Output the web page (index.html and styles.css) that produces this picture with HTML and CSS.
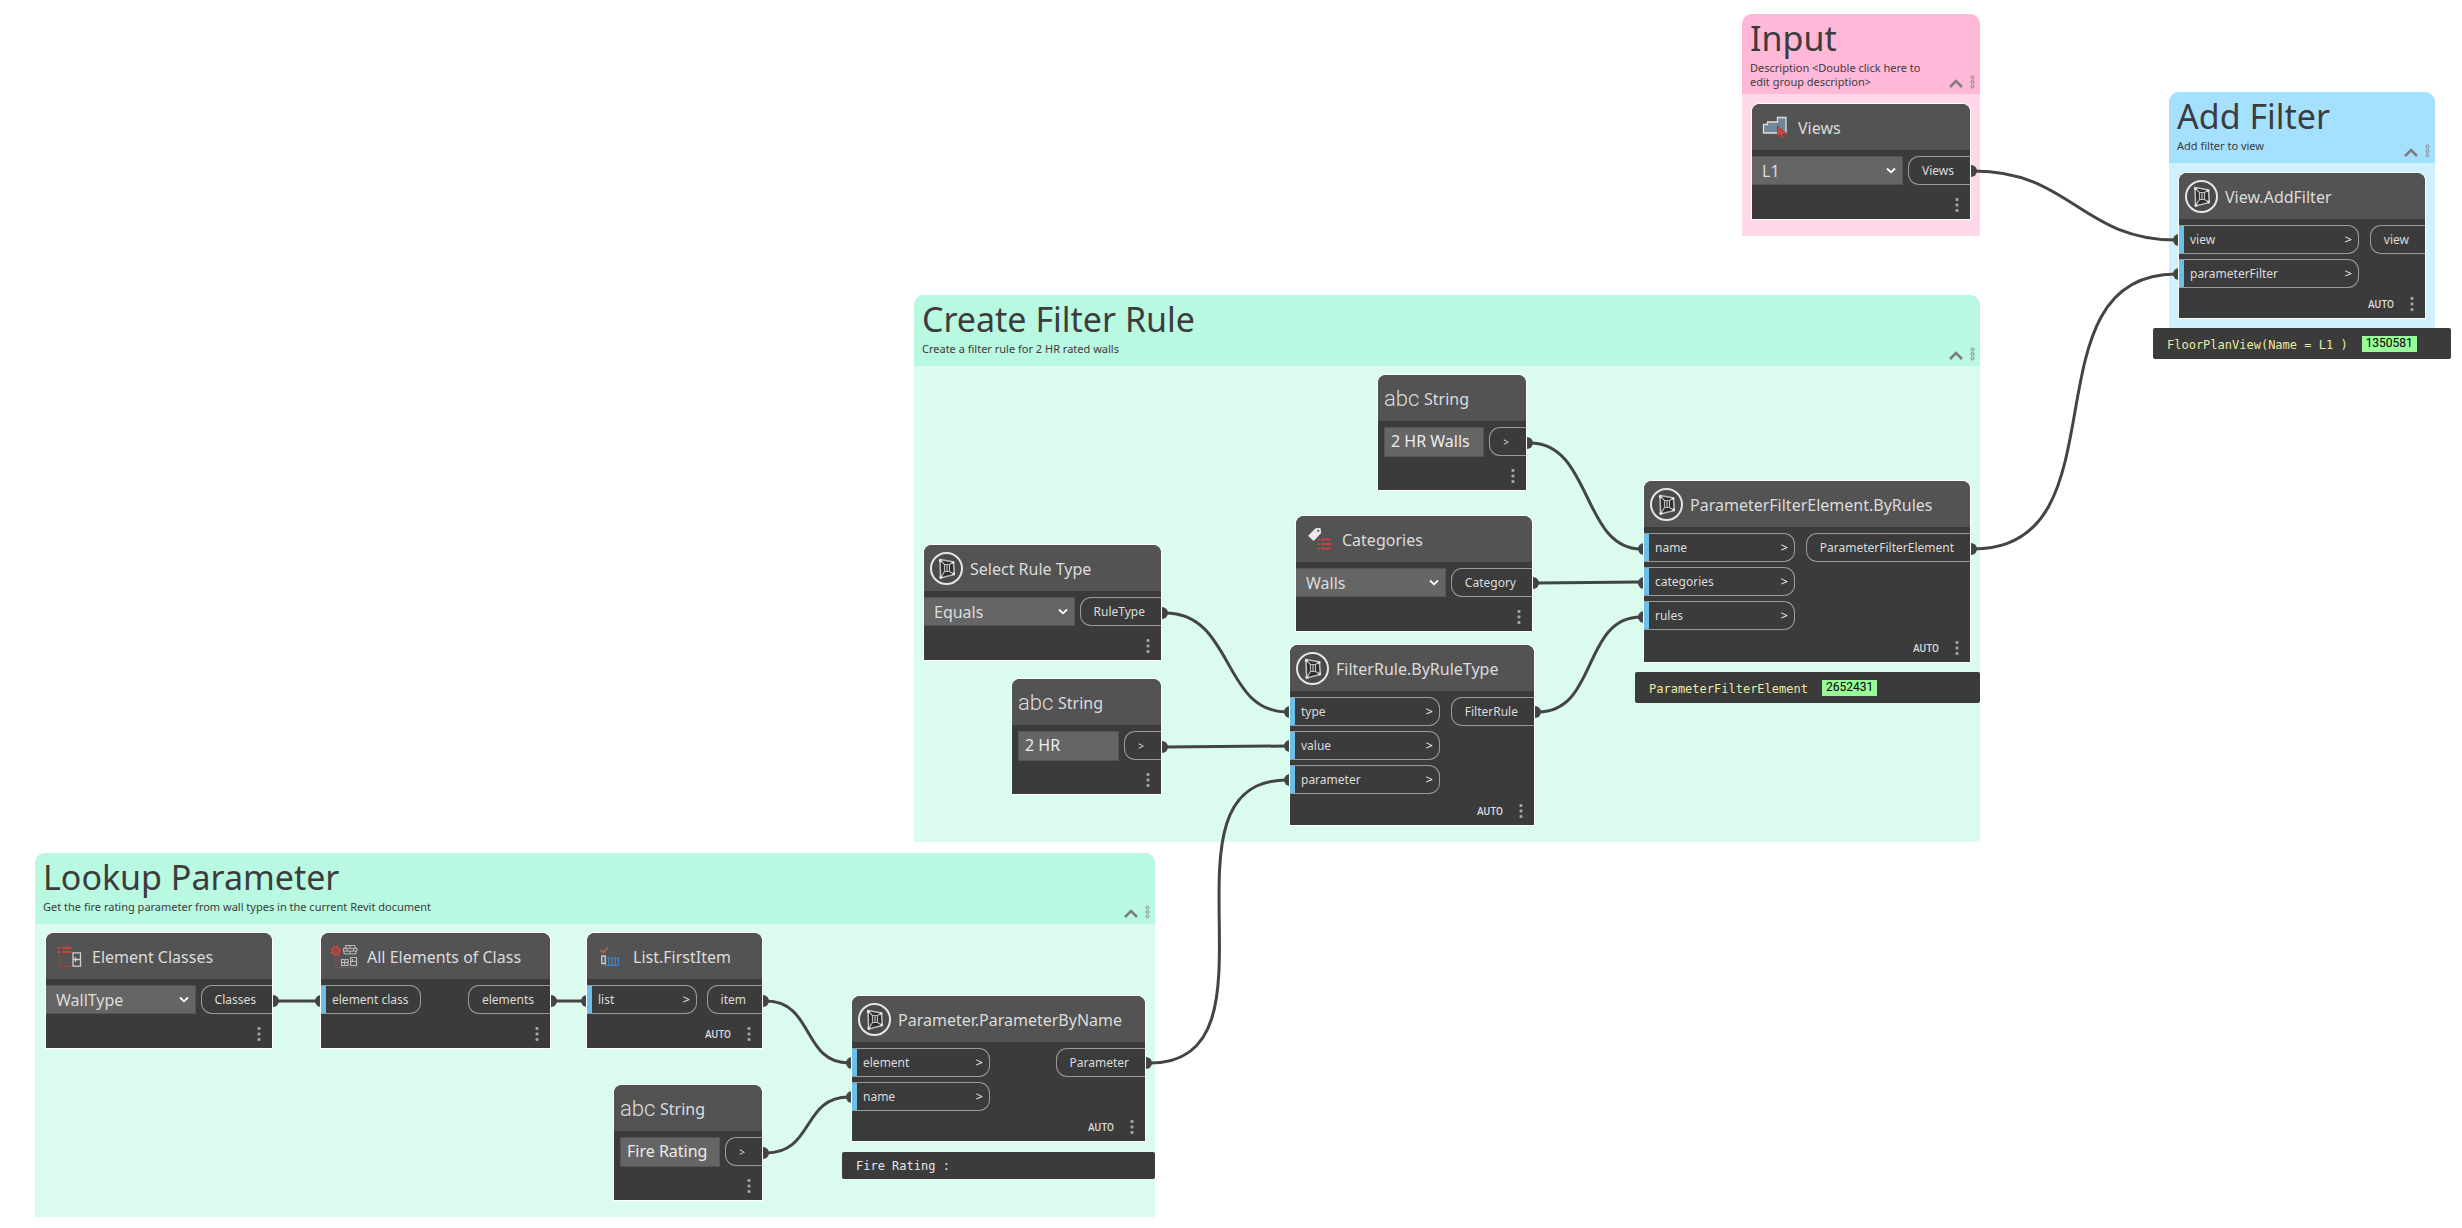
FILE: index.html
```html
<!DOCTYPE html>
<html lang="en">
<head>
<meta charset="utf-8">
<title>Graph workspace</title>
<link rel="stylesheet" href="styles.css">
</head>
<body>
<svg class="defs" aria-hidden="true">
  <symbol id="chevron-down" viewBox="0 0 10 7"><path d="M1 1.5l4 3.8 4-3.8" fill="none" stroke="#fff" stroke-width="1.8"/></symbol>
  <symbol id="chevron-up" viewBox="0 0 14 9"><path d="M1 8l6-6 6 6" fill="none" stroke="#7d7d7d" stroke-width="2.6"/></symbol>
  <symbol id="rings" viewBox="0 0 5 14"><g fill="none" stroke="#858585"><circle cx="2.5" cy="2.5" r="1.5"/><circle cx="2.5" cy="7" r="1.5"/><circle cx="2.5" cy="11.5" r="1.5"/></g></symbol>
  <symbol id="dots" viewBox="0 0 4 16"><g fill="#a3a3a3"><rect x=".5" y="1" width="3" height="3" rx="1"/><rect x=".5" y="6.5" width="3" height="3" rx="1"/><rect x=".5" y="12" width="3" height="3" rx="1"/></g></symbol>
  <symbol id="package" viewBox="0 0 33 33">
    <circle cx="16.5" cy="16.5" r="15.5" fill="#4a4a4a" stroke="#e6e6e6" stroke-width="2"/>
    <path d="M10 7.500l13.500 2.400.8 12.600L10.600 26z" fill="#2c2c2c" stroke="#bdbdbd" stroke-width="1.600"/>
    <path d="M14.500 12.500h5v7h-5zM10 8l4.500 4.500M23 10.400l-3.500 2.100M23.800 22l-4.300-2.500M10.600 25.400l3.900-5.900M17 12.500v7" fill="none" stroke="#bdbdbd" stroke-width="1.200"/>
    <g fill="#e6e6e6"><circle cx="10.400" cy="8.400" r="1.500"/><circle cx="23" cy="10.600" r="1.400"/><circle cx="23.700" cy="22" r="1.400"/><circle cx="11" cy="25.300" r="1.500"/></g>
  </symbol>
  <symbol id="views" viewBox="0 0 33 33">
    <path d="M5.500 13.500h4v-2.500h10v-4.500h8.500v15.500H5.500z" fill="#6f879b" stroke="#dedede" stroke-width="1.300"/>
    <path d="M19.500 15v11l2.800-2.200 1.700 4 2.200-1-1.700-3.800 4.200-.4z" fill="#d0453e" stroke="#6b3a38" stroke-width=".6"/>
  </symbol>
  <symbol id="categories" viewBox="0 0 33 33">
    <path d="M6 12.700l7.700-7.400 4.800-.3.700 5L11.700 18z" fill="#ececec"/><circle cx="16.200" cy="7.800" r="1.100" fill="#535353"/>
    <path d="M15.500 16.500h2.200m1.600 0h9.700M15.500 21h2.200m1.600 0h9.700M15.500 25.500h2.200m1.600 0h9.700" stroke="#c9423f" stroke-width="1.900"/>
  </symbol>
  <symbol id="classes" viewBox="0 0 33 33">
    <path d="M5.500 8H8m2 0h9.500M5.500 12H8m2 0h9.500" stroke="#c9423f" stroke-width="2"/>
    <path d="M8 14.500V26.500H20" fill="none" stroke="#c9423f" stroke-width="1.200" stroke-dasharray="1 1"/>
    <path d="M21 12.800h7.500v13.400H21zM21 19.500h7.500M23.500 17v2M23.500 20v2" fill="none" stroke="#cfcfcf" stroke-width="1.300"/>
  </symbol>
  <symbol id="elements" viewBox="0 0 33 33">
    <circle cx="8.700" cy="10.700" r="3.200" fill="none" stroke="#c9423f" stroke-width="2"/><circle cx="8.700" cy="10.700" r="4.700" fill="none" stroke="#c9423f" stroke-width="1.600" stroke-dasharray="1.850 1.840"/><circle cx="8.700" cy="10.700" r="1" fill="#c9423f"/>
    <path d="M9 16.500V27.500H31" fill="none" stroke="#c9423f" stroke-width="1.200" stroke-dasharray="1 1"/>
    <path d="M18.500 5.500h9.500v2.800h2v2.800h-1v2.800H17v-2.800h-.5V8.300h2zM16.500 8.300h13.500M16.500 11.100h13.500M23 5.500v2.800M20 8.300v2.800M26.500 8.300v2.800M23 11.100v2.800" fill="none" stroke="#b9b9b9"/>
    <path d="M14.500 19.500h6.500v6h-6.500zM17.700 19.500v6M14.500 22.500H21M23.700 17.500h5.800v8h-5.800zM23.700 21.500h5.800M25.500 19v2" fill="none" stroke="#b9b9b9" stroke-width="1.200"/>
  </symbol>
  <symbol id="first" viewBox="0 0 33 33">
    <path d="M7.500 10l2.800 2.600 4.600-4.800" fill="none" stroke="#bb5a58" stroke-width="1.800"/>
    <path d="M12.500 18h12.800v7.500H12.500zM15.700 18v7.500M19 18v7.500M22.200 18v7.500" fill="none" stroke="#4288c4" stroke-width="1.200"/>
    <path d="M8.800 16h3.400v7.500H8.800z" fill="#535353" stroke="#cfcfcf" stroke-width="1.300"/>
  </symbol>
</svg>

<main class="workspace">
  <section class="group pink g-input">
    <header class="group-head">
      <div class="group-text"><h2>Input</h2><p>Description &lt;Double click here to edit group description&gt;</p></div>
      <button class="icon-btn" aria-label="Collapse group"><svg class="i-up"><use href="#chevron-up"/></svg></button>
      <button class="icon-btn" aria-label="Group menu"><svg class="i-rings"><use href="#rings"/></svg></button>
    </header>
  </section>
  <section class="group blue g-add">
    <header class="group-head">
      <div class="group-text"><h2>Add Filter</h2><p>Add filter to view</p></div>
      <button class="icon-btn" aria-label="Collapse group"><svg class="i-up"><use href="#chevron-up"/></svg></button>
      <button class="icon-btn" aria-label="Group menu"><svg class="i-rings"><use href="#rings"/></svg></button>
    </header>
  </section>
  <section class="group green g-create">
    <header class="group-head">
      <div class="group-text"><h2>Create Filter Rule</h2><p>Create a filter rule for 2 HR rated walls</p></div>
      <button class="icon-btn" aria-label="Collapse group"><svg class="i-up"><use href="#chevron-up"/></svg></button>
      <button class="icon-btn" aria-label="Group menu"><svg class="i-rings"><use href="#rings"/></svg></button>
    </header>
  </section>
  <section class="group green g-lookup">
    <header class="group-head">
      <div class="group-text"><h2>Lookup Parameter</h2><p>Get the fire rating parameter from wall types in the current Revit document</p></div>
      <button class="icon-btn" aria-label="Collapse group"><svg class="i-up"><use href="#chevron-up"/></svg></button>
      <button class="icon-btn" aria-label="Group menu"><svg class="i-rings"><use href="#rings"/></svg></button>
    </header>
  </section>

  <svg class="wires" aria-hidden="true">
    <g fill="none" stroke="#444" stroke-width="3">
      <path d="M1974 171C2070 171 2082 240 2176 240"/>
      <path d="M1974 549C2128 549 2022 274 2176 274"/>
      <path d="M1530 443C1592 443 1582 549 1641 549"/>
      <path d="M1536 583L1641 582"/>
      <path d="M1538 712C1598 712 1582 617 1641 617"/>
      <path d="M1165 613C1234 613 1222 712 1287 712"/>
      <path d="M1165 747L1287 746"/>
      <path d="M1150 1063C1292 1063 1147 780 1287 780"/>
      <path d="M276 1001H318M554 1001H584"/>
      <path d="M766 1001C814 1001 802 1063 849 1063"/>
      <path d="M766 1153C814 1153 802 1097 849 1097"/>
    </g>
    <g fill="#444">
      <circle cx="1971" cy="171" r="6"/><circle cx="1971" cy="549" r="6"/><circle cx="1527" cy="443" r="6"/><circle cx="1533" cy="583" r="6"/><circle cx="1535" cy="712" r="6"/><circle cx="1162" cy="613" r="6"/><circle cx="1162" cy="747" r="6"/><circle cx="1146" cy="1063" r="6"/><circle cx="273" cy="1001" r="6"/><circle cx="551" cy="1001" r="6"/><circle cx="763" cy="1001" r="6"/><circle cx="763" cy="1153" r="6"/>
      <circle cx="2179" cy="240" r="6"/><circle cx="2179" cy="274" r="6"/><circle cx="1644" cy="549" r="6"/><circle cx="1644" cy="583" r="6"/><circle cx="1644" cy="617" r="6"/><circle cx="1290" cy="712" r="6"/><circle cx="1290" cy="746" r="6"/><circle cx="1290" cy="780" r="6"/><circle cx="321" cy="1001" r="6"/><circle cx="587" cy="1001" r="6"/><circle cx="852" cy="1063" r="6"/><circle cx="852" cy="1097" r="6"/>
    </g>
  </svg>

  <article class="node n-views">
    <header class="node-head"><svg class="icon"><use href="#views"/></svg><h3>Views</h3></header>
    <div class="node-body"><div class="pick"><select aria-label="Views"><option>L1</option></select><svg class="i-down"><use href="#chevron-down"/></svg></div><div class="out">Views</div></div>
    <footer class="node-foot"><button class="icon-btn" aria-label="Node menu"><svg class="i-dots"><use href="#dots"/></svg></button></footer>
  </article>

  <article class="node n-addfilter">
    <header class="node-head"><svg class="icon"><use href="#package"/></svg><h3>View.AddFilter</h3></header>
    <div class="node-body"><div class="ins"><div class="in">view<b>&gt;</b></div><div class="in">parameterFilter<b>&gt;</b></div></div><div class="out">view</div></div>
    <footer class="node-foot"><span>AUTO</span><button class="icon-btn" aria-label="Node menu"><svg class="i-dots"><use href="#dots"/></svg></button></footer>
  </article>
  <output class="result r-add"><code>FloorPlanView(Name = L1 )</code><mark>1350581</mark></output>

  <article class="node n-string-walls">
    <header class="node-head"><span class="icon abc">abc</span><h3>String</h3></header>
    <div class="node-body"><input class="text" type="text" aria-label="String" value="2 HR Walls"><div class="out mini">&gt;</div></div>
    <footer class="node-foot"><button class="icon-btn" aria-label="Node menu"><svg class="i-dots"><use href="#dots"/></svg></button></footer>
  </article>

  <article class="node n-categories">
    <header class="node-head"><svg class="icon"><use href="#categories"/></svg><h3>Categories</h3></header>
    <div class="node-body"><div class="pick"><select aria-label="Categories"><option>Walls</option></select><svg class="i-down"><use href="#chevron-down"/></svg></div><div class="out">Category</div></div>
    <footer class="node-foot"><button class="icon-btn" aria-label="Node menu"><svg class="i-dots"><use href="#dots"/></svg></button></footer>
  </article>

  <article class="node n-byrules">
    <header class="node-head"><svg class="icon"><use href="#package"/></svg><h3>ParameterFilterElement.ByRules</h3></header>
    <div class="node-body"><div class="ins"><div class="in">name<b>&gt;</b></div><div class="in">categories<b>&gt;</b></div><div class="in">rules<b>&gt;</b></div></div><div class="out">ParameterFilterElement</div></div>
    <footer class="node-foot"><span>AUTO</span><button class="icon-btn" aria-label="Node menu"><svg class="i-dots"><use href="#dots"/></svg></button></footer>
  </article>
  <output class="result r-rules"><code>ParameterFilterElement</code><mark>2652431</mark></output>

  <article class="node n-ruletype">
    <header class="node-head"><svg class="icon"><use href="#package"/></svg><h3>Select Rule Type</h3></header>
    <div class="node-body"><div class="pick"><select aria-label="Rule type"><option>Equals</option></select><svg class="i-down"><use href="#chevron-down"/></svg></div><div class="out">RuleType</div></div>
    <footer class="node-foot"><button class="icon-btn" aria-label="Node menu"><svg class="i-dots"><use href="#dots"/></svg></button></footer>
  </article>

  <article class="node n-string-hr">
    <header class="node-head"><span class="icon abc">abc</span><h3>String</h3></header>
    <div class="node-body"><input class="text" type="text" aria-label="String" value="2 HR"><div class="out mini">&gt;</div></div>
    <footer class="node-foot"><button class="icon-btn" aria-label="Node menu"><svg class="i-dots"><use href="#dots"/></svg></button></footer>
  </article>

  <article class="node n-filterrule">
    <header class="node-head"><svg class="icon"><use href="#package"/></svg><h3>FilterRule.ByRuleType</h3></header>
    <div class="node-body"><div class="ins"><div class="in">type<b>&gt;</b></div><div class="in">value<b>&gt;</b></div><div class="in">parameter<b>&gt;</b></div></div><div class="out">FilterRule</div></div>
    <footer class="node-foot"><span>AUTO</span><button class="icon-btn" aria-label="Node menu"><svg class="i-dots"><use href="#dots"/></svg></button></footer>
  </article>

  <article class="node n-classes">
    <header class="node-head"><svg class="icon"><use href="#classes"/></svg><h3>Element Classes</h3></header>
    <div class="node-body"><div class="pick"><select aria-label="Element class"><option>WallType</option></select><svg class="i-down"><use href="#chevron-down"/></svg></div><div class="out">Classes</div></div>
    <footer class="node-foot"><button class="icon-btn" aria-label="Node menu"><svg class="i-dots"><use href="#dots"/></svg></button></footer>
  </article>

  <article class="node n-elements">
    <header class="node-head"><svg class="icon"><use href="#elements"/></svg><h3>All Elements of Class</h3></header>
    <div class="node-body"><div class="ins"><div class="in">element class</div></div><div class="out">elements</div></div>
    <footer class="node-foot"><button class="icon-btn" aria-label="Node menu"><svg class="i-dots"><use href="#dots"/></svg></button></footer>
  </article>

  <article class="node n-first">
    <header class="node-head"><svg class="icon"><use href="#first"/></svg><h3>List.FirstItem</h3></header>
    <div class="node-body"><div class="ins"><div class="in">list<b>&gt;</b></div></div><div class="out">item</div></div>
    <footer class="node-foot"><span>AUTO</span><button class="icon-btn" aria-label="Node menu"><svg class="i-dots"><use href="#dots"/></svg></button></footer>
  </article>

  <article class="node n-string-fire">
    <header class="node-head"><span class="icon abc">abc</span><h3>String</h3></header>
    <div class="node-body"><input class="text" type="text" aria-label="String" value="Fire Rating"><div class="out mini">&gt;</div></div>
    <footer class="node-foot"><button class="icon-btn" aria-label="Node menu"><svg class="i-dots"><use href="#dots"/></svg></button></footer>
  </article>

  <article class="node n-byname">
    <header class="node-head"><svg class="icon"><use href="#package"/></svg><h3>Parameter.ParameterByName</h3></header>
    <div class="node-body"><div class="ins"><div class="in">element<b>&gt;</b></div><div class="in">name<b>&gt;</b></div></div><div class="out">Parameter</div></div>
    <footer class="node-foot"><span>AUTO</span><button class="icon-btn" aria-label="Node menu"><svg class="i-dots"><use href="#dots"/></svg></button></footer>
  </article>
  <output class="result plain r-name"><code>Fire Rating :</code></output>
</main>
</body>
</html>
```
FILE: styles.css
```css
* { box-sizing: border-box; }
body { margin: 0; background: #fff; font-family: "Noto Sans", sans-serif; }
h2, h3, p { margin: 0; font-weight: 400; }
svg { display: block; }
.defs { display: none; }
.workspace { position: relative; min-height: 100vh; overflow: hidden; }

/* Groups */
.group { position: absolute; border-radius: 10px 10px 0 0; overflow: hidden; }
.group-head { display: flex; align-items: flex-end; min-height: 71px; padding: 1px 5px 5px 8px; color: #3c3c3c; }
.group-text { flex: 1; align-self: flex-start; }
.group-text h2 { font-size: 34px; line-height: 46px; white-space: nowrap; }
.group-text p { font-size: 11px; line-height: 14px; }
.pink { background: #ffd9ea; }
.pink .group-head { background: #ffb8d8; }
.blue { background: #d0efff; }
.blue .group-head { background: #a5e1ff; }
.green { background: #dcfbef; }
.green .group-head { background: #b9f8e1; }
.g-input { left: 1742px; top: 14px; width: 238px; height: 222px; }
.g-add { left: 2169px; top: 92px; width: 266px; height: 240px; }
.g-create { left: 914px; top: 295px; width: 1066px; height: 547px; }
.g-lookup { left: 35px; top: 853px; width: 1120px; height: 364px; }

.icon-btn { padding: 0; border: 0; background: none; }
.i-up { width: 14px; height: 9px; margin: 0 7px 1px; }
.i-rings { width: 5px; height: 14px; }
.i-dots { width: 4px; height: 16px; }

.wires { position: absolute; left: 0; top: 0; width: 100%; height: 100%; }

/* Nodes */
.node { position: absolute; display: flex; flex-direction: column; min-height: 115px; background: #3b3b3b; border-radius: 8px 8px 0 0; box-shadow: 0 0 0 1px #fff; color: #dcdcdc; }
.node-head { display: flex; align-items: center; gap: 7px; height: 46px; padding: 1px 0 0 6px; background: #535353; border-radius: 8px 8px 0 0; }
.node-head h3 { font-size: 16px; line-height: 24px; white-space: nowrap; }
.icon { flex: none; width: 33px; height: 33px; }
.abc { font: 300 22px/33px Roboto, sans-serif; }
.node-body { display: flex; justify-content: space-between; align-items: flex-start; gap: 5px; padding-top: 6px; }
.ins { display: grid; gap: 5px; width: var(--in); }
.in, .out { display: flex; align-items: center; height: 29px; border: 1px solid #999; font-size: 12px; white-space: nowrap; }
.in { justify-content: space-between; padding: 0 6px 1px 11px; border-left: 0; border-radius: 0 11px 11px 0; background: linear-gradient(#6ac0e8, #6ac0e8) left / 5px 100% no-repeat; }
.in b { font-size: 13px; font-weight: 500; }
.out { padding: 0 16px 0 13px; border-right: 0; border-radius: 11px 0 0 11px; }
.mini { padding-right: 17px; font-size: 10px; }
.pick { display: grid; flex: 1; align-items: center; }
.pick > * { grid-area: 1 / 1; }
.pick select { width: 100%; height: 29px; padding: 1px 24px 0 10px; border: 1px solid #555; border-left: 0; border-radius: 0; background: #656565; color: #dcdcdc; font: 16px "Noto Sans", sans-serif; appearance: none; }
.i-down { justify-self: end; width: 10px; height: 7px; margin-right: 7px; pointer-events: none; }
.text { flex: 1; min-width: 0; height: 30px; margin-left: 6px; padding: 0 6px 3px; border: 1px solid #555; background: #656565; color: #ececec; font: 16px "Noto Sans", sans-serif; }
.node-foot { display: flex; justify-content: flex-end; align-items: center; gap: 16px; height: 28px; margin-top: auto; padding-right: 11px; font: 500 10px Roboto, sans-serif; }

.n-views { left: 1752px; top: 104px; width: 218px; }
.n-addfilter { left: 2179px; top: 173px; width: 246px; height: 145px; --in: 180px; }
.n-string-walls { left: 1378px; top: 375px; width: 148px; }
.n-categories { left: 1296px; top: 516px; width: 236px; }
.n-byrules { left: 1644px; top: 481px; width: 326px; height: 181px; --in: 151px; }
.n-ruletype { left: 924px; top: 545px; width: 237px; }
.n-string-hr { left: 1012px; top: 679px; width: 149px; }
.n-filterrule { left: 1290px; top: 645px; width: 244px; height: 180px; --in: 150px; }
.n-classes { left: 46px; top: 933px; width: 226px; }
.n-elements { left: 321px; top: 933px; width: 229px; --in: 100px; }
.n-first { left: 587px; top: 933px; width: 175px; --in: 110px; }
.n-string-fire { left: 614px; top: 1085px; width: 148px; }
.n-byname { left: 852px; top: 996px; width: 293px; height: 145px; --in: 138px; }

/* Result bars */
.result { position: absolute; display: flex; align-items: center; gap: 14px; height: 31px; padding-left: 14px; border-radius: 2px; background: #3b3b3b; }
.result code { padding-top: 3px; color: #eaeaa2; font: 12px "DejaVu Sans Mono", monospace; white-space: pre; }
.result mark { padding: 0 4px 2px; background: #98fb98; color: #000; font: 12px/14px Roboto, sans-serif; }
.plain { height: 27px; }
.plain code { color: #e6e6e6; padding-top: 0; }
.r-add { left: 2153px; top: 328px; width: 298px; }
.r-rules { left: 1635px; top: 672px; width: 345px; }
.r-name { left: 842px; top: 1152px; width: 313px; }
```
